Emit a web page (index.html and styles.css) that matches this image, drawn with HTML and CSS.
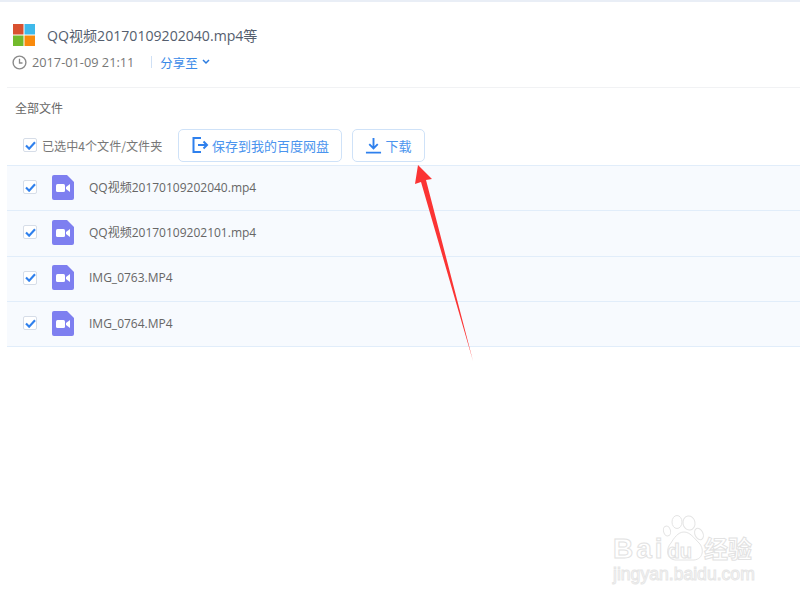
FILE: index.html
```html
<!DOCTYPE html>
<html lang="zh">
<head>
<meta charset="utf-8">
<title>QQ视频20170109202040.mp4等</title>
<link rel="stylesheet" href="styles.css">
</head>
<body>
<div class="page">
  <header class="head">
    <div class="title-row">
      <svg class="logo" viewBox="0 0 22 22" width="22" height="22"><rect x="0" y="0" width="10.500" height="10.500" fill="#d9512f"/><rect x="11.500" y="0" width="10.500" height="10.500" fill="#3fb9ea"/><rect x="0" y="11.500" width="10.500" height="10.500" fill="#72ba2b"/><rect x="11.500" y="11.500" width="10.500" height="10.500" fill="#f98a0c"/></svg>
      <h1 class="title">QQ视频20170109202040.mp4等</h1>
    </div>
    <div class="meta-row">
      <svg class="clock" viewBox="0 0 15 15" width="15" height="15"><circle cx="7.500" cy="7.500" r="6.400" fill="none" stroke="#8a8a8a" stroke-width="1.400"/><path d="M7.500 3.800v4.200h3" fill="none" stroke="#8a8a8a" stroke-width="1.300"/></svg>
      <span class="date">2017-01-09 21:11</span>
      <span class="sep"></span>
      <span class="share">分享至</span>
      <svg class="chev" viewBox="0 0 8 6" width="8" height="6"><path d="M1 1l3 3 3-3" fill="none" stroke="#2b7ce0" stroke-width="1.500"/></svg>
    </div>
  </header>
  <div class="crumb">全部文件</div>
  <div class="toolbar">
    <label class="select-all"><span class="check"><svg viewBox="0 0 12 10" width="11" height="9"><path d="M1 5l3.500 3.500L11 1.500" fill="none" stroke="#2f80ed" stroke-width="2.400"/></svg></span><span class="select-text">已选中4个文件/文件夹</span></label>
    <button class="btn btn-save"><svg viewBox="0 0 18 18" width="18" height="18"><path d="M10 2H2.500v14H10M7 9h9M12.500 5.500 16 9l-3.500 3.500" fill="none" stroke="#2f80ed" stroke-width="2"/></svg>保存到我的百度网盘</button>
    <button class="btn btn-down"><svg viewBox="0 0 18 18" width="17" height="17"><path d="M9 1v11M4.500 7.500 9 12l4.500-4.500M1 16.500h16" fill="none" stroke="#2f80ed" stroke-width="2"/></svg>下载</button>
  </div>
  <ul class="files">
    <li class="file"><span class="check"><svg viewBox="0 0 12 10" width="11" height="9"><path d="M1 5l3.500 3.500L11 1.500" fill="none" stroke="#2f80ed" stroke-width="2.400"/></svg></span><svg class="vid" viewBox="0 0 22 25" width="22" height="25"><path d="M2 0h13l7 7v16a2 2 0 0 1-2 2H2a2 2 0 0 1-2-2V2a2 2 0 0 1 2-2z" fill="#7e7ff0"/><rect x="4" y="9" width="9" height="8" rx="1.500" fill="#fff"/><path d="M14 12l4-3v8l-4-3z" fill="#fff"/></svg><span class="name">QQ视频20170109202040.mp4</span></li>
    <li class="file"><span class="check"><svg viewBox="0 0 12 10" width="11" height="9"><path d="M1 5l3.500 3.500L11 1.500" fill="none" stroke="#2f80ed" stroke-width="2.400"/></svg></span><svg class="vid" viewBox="0 0 22 25" width="22" height="25"><path d="M2 0h13l7 7v16a2 2 0 0 1-2 2H2a2 2 0 0 1-2-2V2a2 2 0 0 1 2-2z" fill="#7e7ff0"/><rect x="4" y="9" width="9" height="8" rx="1.500" fill="#fff"/><path d="M14 12l4-3v8l-4-3z" fill="#fff"/></svg><span class="name">QQ视频20170109202101.mp4</span></li>
    <li class="file"><span class="check"><svg viewBox="0 0 12 10" width="11" height="9"><path d="M1 5l3.500 3.500L11 1.500" fill="none" stroke="#2f80ed" stroke-width="2.400"/></svg></span><svg class="vid" viewBox="0 0 22 25" width="22" height="25"><path d="M2 0h13l7 7v16a2 2 0 0 1-2 2H2a2 2 0 0 1-2-2V2a2 2 0 0 1 2-2z" fill="#7e7ff0"/><rect x="4" y="9" width="9" height="8" rx="1.500" fill="#fff"/><path d="M14 12l4-3v8l-4-3z" fill="#fff"/></svg><span class="name">IMG_0763.MP4</span></li>
    <li class="file"><span class="check"><svg viewBox="0 0 12 10" width="11" height="9"><path d="M1 5l3.500 3.500L11 1.500" fill="none" stroke="#2f80ed" stroke-width="2.400"/></svg></span><svg class="vid" viewBox="0 0 22 25" width="22" height="25"><path d="M2 0h13l7 7v16a2 2 0 0 1-2 2H2a2 2 0 0 1-2-2V2a2 2 0 0 1 2-2z" fill="#7e7ff0"/><rect x="4" y="9" width="9" height="8" rx="1.500" fill="#fff"/><path d="M14 12l4-3v8l-4-3z" fill="#fff"/></svg><span class="name">IMG_0764.MP4</span></li>
  </ul>
  <svg class="arrow" viewBox="0 0 800 600" width="800" height="600"><path d="M418 165 432 179 426 180 473 361 421 182 415 184z" fill="#fb3434"/></svg>
  <div class="mark">
    <svg class="paw" viewBox="0 0 46 50" width="46" height="50"><g fill="#fff" stroke="#e4e4e4" stroke-width="1"><ellipse cx="7" cy="19" rx="3.500" ry="5" transform="rotate(-15 7 19)"/><ellipse cx="17" cy="10" rx="5" ry="6.500"/><ellipse cx="29" cy="11" rx="6" ry="7" transform="rotate(-10 29 11)"/><ellipse cx="39" cy="22" rx="4" ry="6" transform="rotate(-25 39 22)"/><path d="M24 20C18 20 14 26 11 31 6 36 6 47 15 48H34C44 47 44 36 39 31 34 26 30 20 24 20z"/></g></svg>
    <div class="mark-main"><span class="mark-bai">Bai</span><span class="mark-du">du</span><span class="mark-cn">经验</span></div>
    <div class="mark-url">jingyan.baidu.com</div>
  </div>
</div>
</body>
</html>
```
FILE: styles.css
```css
* { box-sizing: border-box; }
html, body { margin: 0; padding: 0; }
body { background: #fff; font-family: "Noto Sans CJK SC", "Noto Sans", sans-serif; color: #666; overflow: hidden; }
.page { position: relative; width: 800px; height: 600px; border-top: 2px solid #e9eef6; padding-left: 7px; overflow: hidden; }
.head { height: 86px; border-bottom: 1px solid #f1f2f4; padding: 21px 0 0 6px; }
.title-row { display: flex; align-items: center; height: 24px; }
.logo { flex: none; }
.title { margin: 0 0 0 12px; font-family: "Open Sans", "Noto Sans CJK SC", sans-serif; font-size: 14.100px; font-weight: 400; color: #555e6e; }
.meta-row { display: flex; align-items: center; height: 18px; margin-top: 6px; font-size: 12.750px; font-family: "Open Sans", "Noto Sans CJK SC", sans-serif; }
.clock { flex: none; margin-left: -1px; }
.date { margin-left: 5px; color: #777; }
.sep { width: 1px; height: 12px; background: #cfe0f5; margin: 0 8px 0 17px; }
.share { color: #3a8ae8; font-size: 12.500px; }
.chev { margin-left: 4px; }
.crumb { height: 17px; margin: 11px 0 0 8px; font-size: 12px; line-height: 17px; color: #666; }
.toolbar { display: flex; align-items: center; height: 40px; margin-top: 9px; padding-left: 16px; }
.select-all { display: flex; align-items: center; width: 155px; }
.check { flex: none; display: flex; align-items: center; justify-content: center; width: 14px; height: 14px; border: 1px solid #d6dde8; border-radius: 2px; background: #fff; }
.select-text { margin-left: 5px; font-size: 12.100px; color: #777; }
.btn { display: flex; align-items: center; justify-content: center; height: 33px; padding: 0; border: 1px solid #cfe2f8; border-radius: 5px; background: #fff; color: #4b94ee; font-family: "Noto Sans CJK SC", sans-serif; font-size: 13px; }
.btn-save { width: 164px; gap: 3px; }
.btn-down { width: 73px; margin-left: 10px; gap: 3px; }
.files { list-style: none; margin: 0; padding: 0; border-top: 1px solid #e1edfa; }
.file { display: flex; align-items: center; height: 45.300px; padding: 0 0 2px 16px; background: #f7fafe; border-bottom: 1px solid #e1edfa; }
.vid { flex: none; margin-left: 15px; }
.name { margin-left: 15px; font-family: "Open Sans", "Noto Sans CJK SC", sans-serif; font-size: 12px; color: #666; }
.arrow { position: absolute; left: 0; top: -2px; pointer-events: none; }
.mark { position: absolute; left: 613px; top: 510px; width: 145px; height: 72px; color: #fff; }
.paw { position: absolute; left: 47px; top: 0; }
.mark-main { position: absolute; left: 0; top: 22px; height: 28px; line-height: 28px; display: flex; align-items: baseline; font-family: "Liberation Sans", sans-serif; -webkit-text-stroke: 1px #e2e2e2; }
.mark-bai { font-size: 28px; font-weight: 700; letter-spacing: 3px; }
.mark-du { font-size: 20px; font-weight: 700; margin-left: 2px; }
.mark-cn { font-family: "Noto Sans CJK SC", sans-serif; font-size: 24px; font-weight: 700; margin-left: 12px; }
.mark-url { position: absolute; left: 0; top: 53px; height: 19px; line-height: 19px; font-family: "Liberation Sans", sans-serif; font-size: 17.600px; -webkit-text-stroke: 1px #e6e6e6; white-space: nowrap; }
```
